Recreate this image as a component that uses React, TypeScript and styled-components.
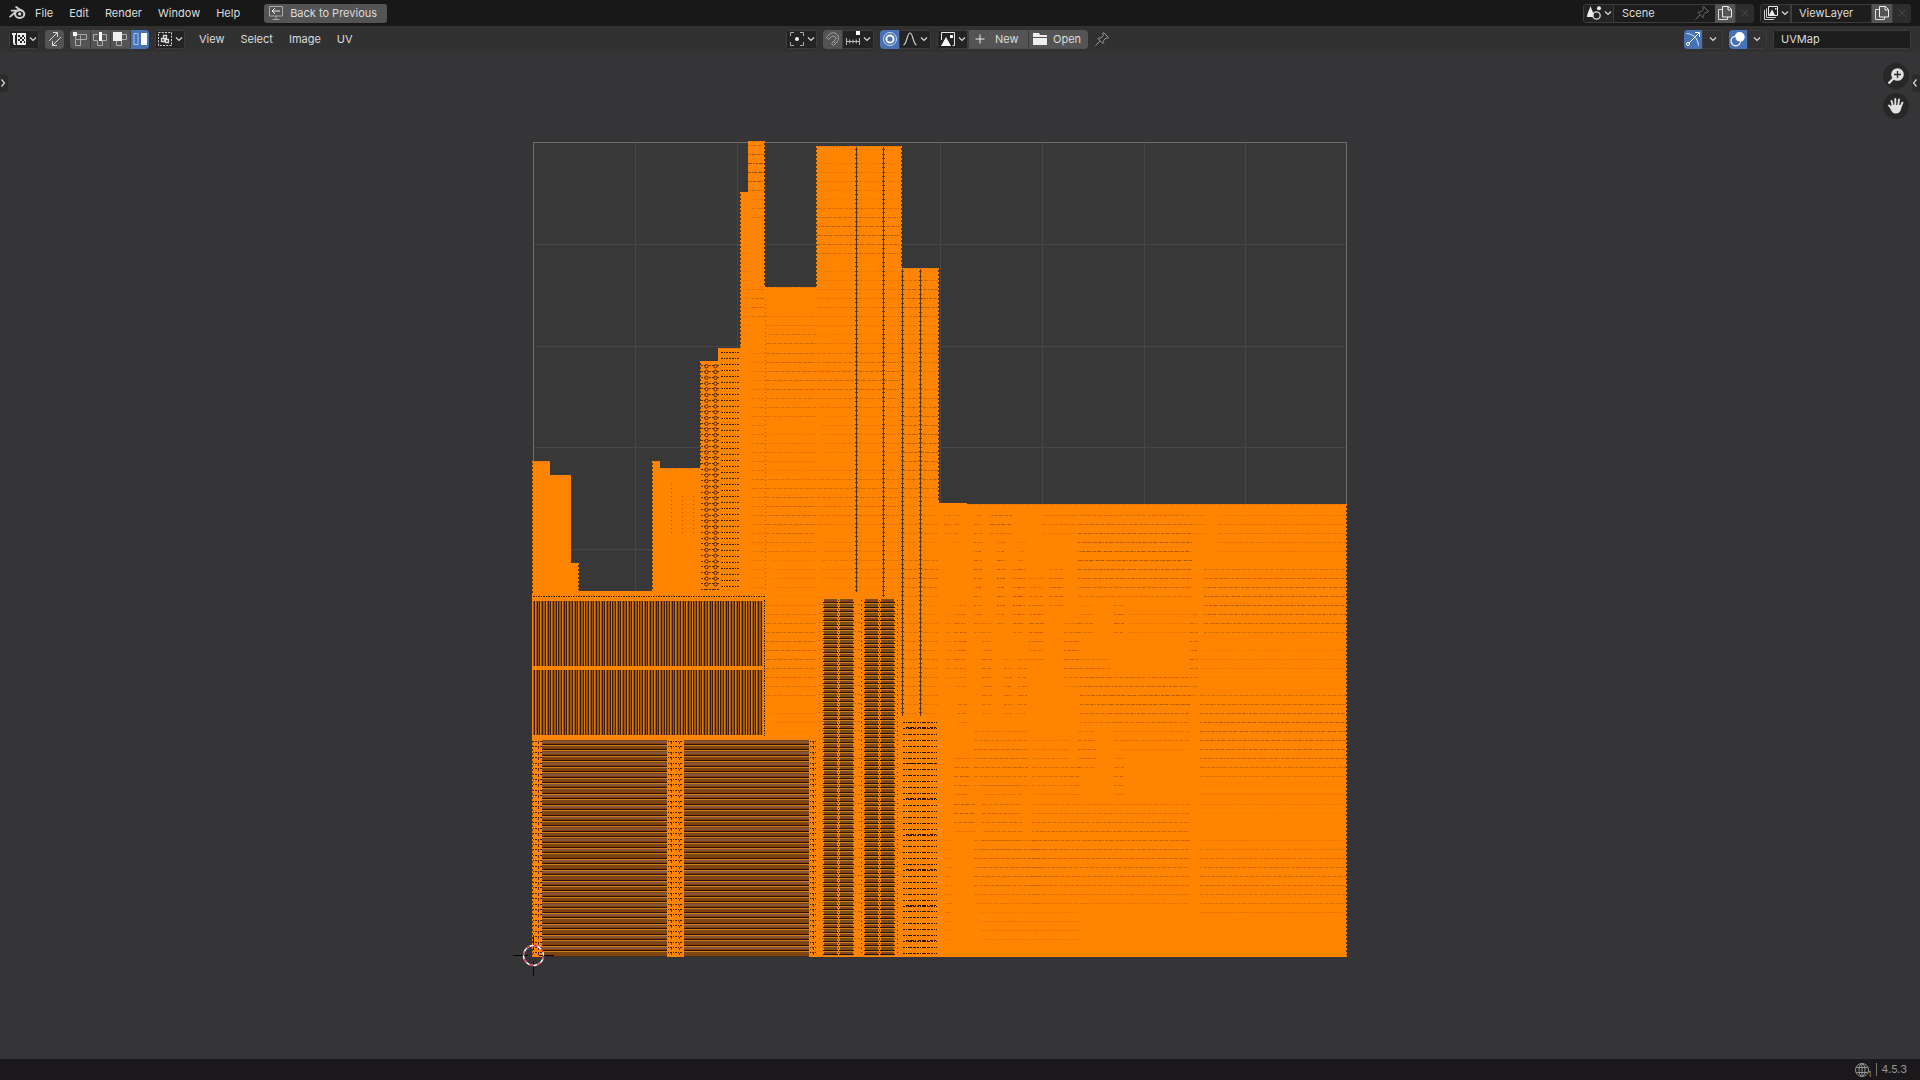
import React from "react";
import styled, { createGlobalStyle } from "styled-components";

const GlobalStyle = createGlobalStyle`
  * { box-sizing: border-box; }
  html, body, #root { height: 100%; }
  body {
    margin: 0;
    background: #353537;
    color: #dcdcdc;
    font: 11px/18px Inter, "Noto Sans", sans-serif;
  }
  button, input { font: inherit; color: inherit; }
`;

/* ---------- layout ---------- */

const Shell = styled.div`
  min-height: 100vh;
  display: flex;
  flex-direction: column;
`;

const TopBar = styled.header`
  height: 26px;
  flex: none;
  display: flex;
  align-items: center;
  justify-content: space-between;
  padding: 0 9px;
  background: #181818;
`;

const EditorHeader = styled.div`
  height: 26px;
  flex: none;
  display: grid;
  grid-template-columns: 1fr auto 1fr;
  align-items: center;
  padding: 0 9px;
  background: #313131;
`;

const Cluster = styled.div<{ $gap?: number; $end?: boolean; $trail?: number }>`
  display: flex;
  align-items: center;
  gap: ${(p) => p.$gap ?? 6}px;
  justify-content: ${(p) => (p.$end ? "flex-end" : "flex-start")};
  margin-right: ${(p) => p.$trail ?? 0}px;
`;

const Canvas = styled.main`
  position: relative;
  flex: 1;
  display: flex;
  justify-content: center;
  align-items: flex-start;
  padding: 68px 40px 0 0;
  overflow: hidden;
`;

const StatusBar = styled.footer`
  height: 21px;
  flex: none;
  display: flex;
  align-items: center;
  justify-content: flex-end;
  gap: 5px;
  padding: 0 13px;
  background: #1a181a;
  color: #969696;
`;

/* ---------- controls ---------- */

const Menus = styled.nav`
  display: flex;
  align-items: center;
  padding-left: 1px;
`;

const MenuItem = styled.button`
  height: 20px;
  padding: 0 8px;
  border: 0;
  background: none;
  white-space: nowrap;
`;

const BackButton = styled.button`
  display: flex;
  align-items: center;
  gap: 6px;
  height: 19px;
  margin-left: 16px;
  padding: 0 10px 0 4px;
  border: 0;
  border-radius: 3px;
  background: #545454;
  white-space: nowrap;
`;

const Group = styled.div`
  display: flex;
  height: 19px;
  flex: none;
  overflow: hidden;
  border-radius: 4px;
  box-shadow: inset 0 0 0 1px #3d3d3d;
`;

const tones = { dark: "#232323", grey: "#545454", blue: "#4772b3", mute: "#2d2d2d", flat: "transparent" };

const Tool = styled.button<{ $w: number; $tone: keyof typeof tones }>`
  width: ${(p) => p.$w}px;
  height: 19px;
  display: flex;
  align-items: center;
  justify-content: center;
  flex: none;
  gap: 2px;
  padding: 0;
  border: 1px solid ${(p) => (p.$tone === "dark" ? "#3d3d3d" : "transparent")};
  border-radius: 0;
  background: ${(p) => tones[p.$tone]};
  background-clip: border-box;
  & + & { border-left-color: #3a3a3a; }
`;

const LabelTool = styled(Tool)`
  justify-content: flex-start;
  gap: 5px;
  padding-left: 3px;
`;

const Label = styled.span<{ $inset?: number }>`
  padding-left: ${(p) => p.$inset ?? 0}px;
`;

const Field = styled.input<{ $w: number }>`
  width: ${(p) => p.$w}px;
  height: 19px;
  padding: 0 7px;
  border: 1px solid #3d3d3d;
  border-radius: 0;
  background: #1d1d1d;
  outline: 0;
`;

const PinnedField = styled.div`
  display: flex;
  align-items: center;
  width: 101px;
  background: #1d1d1d;
  border: 1px solid #3d3d3d;
  border-width: 1px 0;
  input { border: 0; height: 17px; padding-left: 8px; }
`;

const PinButton = styled.button<{ $dim?: boolean }>`
  display: flex;
  padding: 0;
  border: 0;
  background: none;
  color: ${(p) => (p.$dim ? "#6c6c6c" : "#9a9a9a")};
`;

const Version = styled.span`
  padding-left: 4px;
  border-left: 1px solid #777;
  line-height: 13px;
`;

const GlobeRow = styled.span`
  display: flex;
  align-items: flex-end;
`;

const Sub = styled.sub`
  font-size: 8px;
  line-height: 8px;
  margin-left: -2px;
`;

const RegionTab = styled.button<{ $side: "left" | "right" }>`
  position: absolute;
  top: 22px;
  ${(p) => p.$side}: 0;
  width: 8px;
  height: 18px;
  display: flex;
  align-items: center;
  justify-content: flex-start;
  padding: 0;
  border: 0;
  border-radius: ${(p) => (p.$side === "left" ? "0 4px 4px 0" : "4px 0 0 4px")};
  background: #2a2a2a;
`;

const NavGizmos = styled.div`
  position: absolute;
  top: 11px;
  right: 11px;
  display: flex;
  flex-direction: column;
  gap: 4px;
`;

const NavButton = styled.button`
  width: 26px;
  height: 26px;
  display: flex;
  align-items: center;
  justify-content: center;
  padding: 0;
  border: 0;
  border-radius: 50%;
  background: #272728;
`;

const Drawing = styled.svg`
  display: block;
  flex: none;
`;

/* ---------- icons ---------- */

const Svg = ({ children, w = 16, size = 16 }: { children: React.ReactNode; w?: number; size?: number }) => (
  <svg width={w} height={size} viewBox={`0 0 ${w} ${size}`} fill="none" stroke="currentColor" strokeWidth="1" aria-hidden="true">
    {children}
  </svg>
);

const Chevron = () => (
  <Svg w={8} size={8}><path d="M1 2.500 4 5.500 7 2.500" strokeWidth="1.200" /></Svg>
);

const BlenderLogo = () => (
  <svg width="17" height="16" viewBox="0 0 17 16" fill="none" stroke="#d0d0d0" aria-hidden="true">
    <ellipse cx="10.700" cy="9" rx="4.600" ry="4" strokeWidth="2" />
    <circle cx="10.700" cy="8.900" r="1.700" fill="#d0d0d0" stroke="none" />
    <path d="M7.200 2 13.500 6.200M2.600 5.600H10M1.200 11.600 7.200 6.400" strokeWidth="1.900" strokeLinecap="round" />
  </svg>
);

const BackIcon = () => (
  <Svg><path d="M1.500 1.500h13v9.500h-13zM8 11v3M4.500 14.500h7" stroke="#aaa" /><path d="M12 6H4M7 3.200 4 6l3 2.800" stroke="#eee" /></Svg>
);

const UvEditorIcon = () => (
  <Svg>
    <path d="M1 2h4v2l-1 0v8l1 2H3L2 12V4H1zM6 2h9v12H6z" fill="#eee" stroke="none" />
    <path d="M7 4h2v2H7zM11 4h2v2h-2zM9 6h2v2H9zM13 6h1v2h-1zM7 8h2v2H7zM11 8h2v2h-2zM9 10h2v2H9zM13 10h1v2h-1z" fill="#222" stroke="none" />
  </Svg>
);

const SyncIcon = () => (
  <Svg><path d="M2 10 10.500 1.500M6 1.500h4.500V6M14 6l-8.500 8.500M10 14.500H5.500V10" stroke="#d8d8d8" /></Svg>
);

const VertexIcon = () => (
  <Svg><path d="M5 3.500h9.500v5H3.500V5M3.500 8.500v6h5v-10" stroke="#aaa" /><path d="M1 1h4v4H1z" fill="#fff" stroke="none" /></Svg>
);
const EdgeIcon = () => (
  <Svg><path d="M6 3.500H1.500v6h4v5h5v-5M10 3.500h4.500v6H10" stroke="#aaa" /><path d="M7 1h3v9H7z" fill="#fff" stroke="none" /></Svg>
);
const FaceIcon = () => (
  <Svg><path d="M10 3.500h4.500v5H10M4.500 10v4.500h5V10" stroke="#aaa" /><path d="M1 1h9v9H1z" fill="#eee" stroke="none" /></Svg>
);
const IslandIcon = () => (
  <Svg><path d="M2 2.500h4v11H2z" stroke="#a9c3ef" /><path d="M9 2h6v12H9z" fill="#fff" stroke="none" /></Svg>
);
const StickyIcon = () => (
  <Svg><path d="M1.500 1.500h13v13h-13z" strokeDasharray="2 1.250" /><path d="M6.500 4.500h3v3h-3zM4.500 7.500h3v3h-3zM8.500 8.500h3v3h-3z" strokeWidth="1.300" /></Svg>
);
const PivotIcon = () => (
  <Svg><path d="M1.500 5V1.500H5M11 1.500h3.500V5M14.500 11v3.500H11M5 14.500H1.500V11" stroke="#aaa" /><circle cx="8" cy="8" r="2" fill="#eee" stroke="none" /></Svg>
);
const MagnetIcon = () => (
  <Svg><path d="M1.500 6.500 4 3.500a5.300 5.300 0 0 1 8 7.500l-3.500 3.500-2-2L10 9a2.400 2.400 0 0 0-3.500-3.300L3.500 8.500zM10.500 12.500l-2-2" stroke="#a5a5a5" /></Svg>
);
const SnapIcon = () => (
  <Svg><path d="M1.500 7v7M14.500 7v7M1.500 10.500h13M4.700 8.500v4M8 8.500v4M11.300 8.500v4" stroke="#bbb" /><path d="M11 0h4v4h-4z" fill="#fff" stroke="none" /></Svg>
);
const ProportionalIcon = () => (
  <Svg><circle cx="8" cy="8" r="6.500" stroke="#c4d8f8" /><circle cx="8" cy="8" r="3.600" stroke="#fff" strokeWidth="2" /></Svg>
);
const FalloffIcon = () => (
  <Svg><path d="M1.500 14C5 13 5 2 8 2s3 11 6.500 12" stroke="#ccc" strokeWidth="1.200" /></Svg>
);
const ImageIcon = () => (
  <Svg><path d="M1.500 9V1.500h13v13h-2" stroke="#e5e5e5" /><path d="M1 15 6 6l5 9z" fill="#fff" stroke="none" /><path d="M10 4h3v3h-3z" fill="#fff" stroke="none" /></Svg>
);
const PlusIcon = () => (<Svg><path d="M8 3.500v9M3.500 8h9" stroke="#eee" /></Svg>);
const FolderIcon = () => (
  <Svg><path d="M1 2h6l1 2h7v2H1zM1 7h14v7H1z" fill="#eee" stroke="none" /></Svg>
);
const PinIcon = () => (
  <Svg><path d="M9.500 1.500 14.500 6.500 13 7.500 12 7 9.500 9.500c.5 1.500 0 2.500-.5 3L4 7.500c1-.7 2-.8 3-.5L9.500 4.500 8.700 3zM6 10l-4.500 4.500" /></Svg>
);
const SceneIcon = () => (
  <Svg><path d="M4.500 1C5.500 5 8 7.500 7.500 12H1C1 8 3.500 5 4.500 1z" fill="#eee" stroke="none" /><circle cx="10.500" cy="10.500" r="3.700" stroke="#ddd" strokeWidth="1.300" /><circle cx="13" cy="3.300" r="2" fill="#eee" stroke="none" /></Svg>
);
const LayersIcon = () => (
  <Svg><path d="M1.500 5v9.500H11M3.500 3.500v9H13" stroke="#ccc" /><path d="M5.500 1.500h9v9h-9z" stroke="#eee" /><path d="m6 10 3-5.500 3 5.500zM12 3h1.500v1.500H12z" fill="#eee" stroke="none" /></Svg>
);
const CopyIcon = () => (
  <Svg><path d="M5 4.500H1.500v10h9V12" stroke="#ddd" /><path d="M5.500 1.500h6l3 3v7.500h-9zM11 1.500V5h3.500" stroke="#eee" /></Svg>
);
const CloseIcon = () => (<Svg><path d="m4.500 4.500 7 7M11.500 4.500l-7 7" stroke="#484848" /></Svg>);
const GizmoIcon = () => (
  <Svg><path d="M1.500 2.500c6 0 11.500 5 12 12" stroke="#dce8fb" /><path d="M4 12 14 2M10 1.500h4.500V6" stroke="#fff" /><circle cx="3" cy="13" r="1.500" stroke="#fff" /></Svg>
);
const OverlayIcon = () => (
  <Svg><circle cx="9.700" cy="6" r="5" fill="#fff" stroke="none" /><circle cx="5.800" cy="10" r="4.800" stroke="#fff" strokeWidth="1.200" /><path d="M5.500 6.500a4 4 0 0 0 4.500 4.500" stroke="#4772b3" /></Svg>
);
const ZoomIcon = () => (
  <Svg w={18} size={18}><circle cx="10.500" cy="7.500" r="6.300" fill="#e0e0e0" stroke="none" /><path d="m6.500 11.500-5 5" stroke="#e0e0e0" strokeWidth="2.400" /><path d="M10.500 4v7M7 7.500h7" stroke="#272728" strokeWidth="1.300" /></Svg>
);
const HandIcon = () => (
  <Svg w={18} size={18}>
    <path d="M6 9 4.500 4M8.300 8V2M11.300 8 12 2.500M13.500 10 15.500 5.500M5 11.500 2 8.500" stroke="#e0e0e0" strokeWidth="1.900" strokeLinecap="round" />
    <path d="M5 8h9.500c0 5-1.500 8.500-5.500 8.500S4.500 14 2.500 10z" fill="#e0e0e0" stroke="none" />
  </Svg>
);
const GlobeIcon = () => (
  <Svg><circle cx="8" cy="8" r="6.500" /><ellipse cx="8" cy="8" rx="3" ry="6.500" /><path d="M2.500 5.500h11M2.500 10.500h11M8 1.500v13" /></Svg>
);
const ArrowIcon = ({ left }: { left?: boolean }) => (
  <Svg w={6} size={10}><path d={left ? "M4.500 1.500 1.500 5l3 3.500" : "M1.500 1.500 4.500 5l-3 3.500"} strokeWidth="1.200" /></Svg>
);

/* ---------- UV layout ---------- */

const ORANGE = "#ff8500";
const SEAM_STEP = 9.02;

const rows = (x0: number, x1: number, y0: number, y1: number, step: number) => {
  let d = "";
  for (let y = y0; y <= y1; y += step) d += `M${x0} ${y.toFixed(1)}H${x1}`;
  return d;
};
const cols = (x0: number, x1: number, y0: number, y1: number, step: number) => {
  let d = "";
  for (let x = x0; x <= x1; x += step) d += `M${x.toFixed(1)} ${y0}V${y1}`;
  return d;
};

const SILHOUETTE =
  "M532 957V461H550V475H571V563H579V591H652V461H660V468H700V361H718V348H740V192H748V141H765V287H816V146H902V268H939V503H967V504H1347V957H816V957Z";

// x from, x to, first row, last row, strength
const SEAMS: [number, number, number, number, number][] = [
  [748, 765, 145, 194, 0.9], [752, 764, 199, 226, 0.35], [742, 750, 250, 340, 0.25], [752, 764, 286, 322, 0.5],
  [752, 764, 350, 590, 0.35], [766, 816, 314, 422, 0.5], [766, 816, 430, 475, 0.25], [766, 816, 475, 556, 0.5],
  [772, 816, 556, 600, 0.2], [766, 816, 601, 700, 0.5], [772, 816, 705, 732, 0.2],
  [817, 900, 155, 200, 0.2], [817, 900, 204, 262, 0.6], [817, 900, 268, 340, 0.25], [817, 900, 343, 410, 0.5],
  [822, 900, 415, 460, 0.25], [817, 900, 465, 530, 0.4], [822, 900, 535, 590, 0.25],
  [903, 938, 276, 320, 0.6], [903, 938, 322, 380, 0.3], [903, 938, 388, 500, 0.6], [903, 938, 505, 545, 0.3],
  [903, 938, 554, 600, 0.5], [903, 938, 605, 716, 0.35],
  [944, 952, 507, 536, 0.4], [954, 960, 512, 545, 0.4], [974, 982, 508, 640, 0.6], [990, 1012, 508, 535, 0.7],
  [997, 1005, 535, 630, 0.7], [1018, 1026, 535, 630, 0.4], [954, 966, 597, 690, 0.55], [958, 967, 696, 730, 0.55],
  [946, 952, 608, 690, 0.3], [1013, 1022, 566, 640, 0.6], [1029, 1044, 575, 665, 0.55], [1049, 1064, 566, 612, 0.6],
  [1064, 1080, 620, 690, 0.55], [982, 992, 620, 720, 0.5], [1004, 1012, 656, 720, 0.5], [1018, 1027, 656, 720, 0.55],
  [1042, 1076, 508, 535, 0.35], [1078, 1192, 508, 600, 0.7], [1192, 1206, 508, 535, 0.3], [1078, 1094, 605, 640, 0.4],
  [1114, 1124, 598, 640, 0.6], [1128, 1190, 606, 640, 0.2], [1204, 1346, 562, 640, 0.65], [1218, 1346, 513, 555, 0.3],
  [1190, 1198, 606, 700, 0.6], [1080, 1110, 657, 730, 0.6], [1110, 1190, 670, 730, 0.65], [1200, 1346, 645, 680, 0.18],
  [1200, 1346, 688, 778, 0.65], [974, 1028, 729, 790, 0.5], [954, 970, 750, 806, 0.55], [1032, 1070, 740, 800, 0.35],
  [1070, 1080, 760, 800, 0.5], [1078, 1096, 729, 776, 0.5], [1114, 1190, 729, 750, 0.35], [1114, 1124, 756, 800, 0.5],
  [982, 1022, 785, 850, 0.45], [1032, 1190, 795, 905, 0.5], [1200, 1346, 785, 815, 0.2], [954, 975, 795, 832, 0.6],
  [974, 1040, 832, 905, 0.5], [1200, 1346, 840, 915, 0.45], [945, 952, 834, 945, 0.35], [980, 1080, 910, 945, 0.25],
];

// strength rises and falls across a band, strongest in its middle rows
const seamRows = ([x0, x1, y0, y1, strength]: (typeof SEAMS)[number]) => {
  const out: { d: string; o: number; shift: number }[] = [];
  const first = 145.5 + Math.ceil((y0 - 145.5) / SEAM_STEP) * SEAM_STEP;
  for (let y = first; y <= y1; y += SEAM_STEP) {
    const t = (y - y0) / Math.max(1, y1 - y0);
    out.push({
      d: `M${x0} ${y.toFixed(1)}H${x1}`,
      o: +(strength * (0.35 + 0.45 * Math.sin(Math.PI * t))).toFixed(2),
      shift: Math.round(y) % 4,
    });
  }
  return out;
};

const UvLayout = () => (
  <Drawing width="900" height="880" viewBox="490 120 900 880" role="img" aria-label="UV layout">
    <path d="M533 142H1346V956H533Z" fill="#383839" />
    <path d={cols(635.5, 1300, 143, 956, 101.7) + rows(534, 1346, 244.5, 900, 101.7)} stroke="#464648" shapeRendering="crispEdges" />
    <path d="M533.500 142.500H1346.500V956.500H533.500Z" fill="none" stroke="#6e6e6e" />

    <g shapeRendering="crispEdges" fill="none">
      <path d={SILHOUETTE} fill={ORANGE} />

      {/* outline vertices */}
      <path d="M532.500 463V594M532.500 741V955M652.500 463V590M578.500 565V590M700.500 363V466M740.500 194V347M764.500 143V286M816.500 148V286M938.500 270V502M1346.500 506V955M901.500 148V266" stroke="#4b3a27" strokeDasharray="2 2" />
      <path d="M534 461.500H550M654 461.500H660M662 468.500H700M720 348.500H740M750 141.500H765M767 287.500H816M818 146.500H902M904 268.500H939M969 504.500H1346" stroke="#c96c08" strokeDasharray="1 2" />

      {/* seam rows */}
      {SEAMS.flatMap(seamRows).map((s, i) => (
        <path key={i} d={s.d} stroke="#733500" strokeOpacity={s.o} strokeDasharray="4 1 1 1 3 1" strokeDashoffset={s.shift} />
      ))}

      {/* beaded columns */}
      <path d="M856.500 147V592M883.500 147V597M902.500 269V716M920.500 269V716" stroke="#423a33" />
      <path d="M856.500 149V592M883.500 149V597M902.500 271V716M920.500 271V716" stroke="#5a3d20" strokeWidth="3" strokeDasharray="1 3.500" />

      {/* faint dotted columns */}
      <path d="M671.500 484V536M682.500 496V536M693.500 496V536M765.500 300V590" stroke="#b35d05" strokeDasharray="1 3" />

      {/* ringed vertices */}
      <path d={rows(701, 719, 365.8, 590, 5.74)} stroke="#5a2c00" strokeDasharray="2 1 4 1" />
      <path d={rows(721, 740, 352.8, 590, 6)} stroke="#3a1a00" strokeDasharray="2 1 1 1 2 1 2 1" />

      {/* vertical strips */}
      <path d="M533 601H763V666H533ZM533 670H763V735H533Z" fill="#a2560b" />
      <path d={cols(535.5, 763, 601, 666, 5.4) + cols(535.5, 763, 670, 735, 5.4)} stroke="#cf7d14" />
      <path d={cols(534.5, 763, 601, 666, 2.7) + cols(534.5, 763, 670, 735, 2.7)} stroke="#3c1c08" />
      <path d="M533 596.500H765M764.500 600V736" stroke="#3a1c02" strokeDasharray="2 1 1 1" />

      {/* horizontal strips */}
      <path d="M542 740H667V956H542ZM684 740H809V956H684Z" fill="#7d4616" />
      <path d={rows(542, 667, 742, 955, 10.84) + rows(684, 809, 742, 955, 10.84)} stroke="#85543a" strokeWidth="2" />
      <path d={rows(542, 667, 743.5, 955, 5.42) + rows(684, 809, 743.5, 955, 5.42)} stroke="#854000" />
      <path d={rows(542, 667, 744.5, 955, 5.42) + rows(684, 809, 744.5, 955, 5.42)} stroke="#2f0e08" />
      <path d={rows(542, 667, 745.5, 955, 5.42) + rows(684, 809, 745.5, 955, 5.42)} stroke="#cc7e1b" />
      <path d={rows(533, 542, 741.5, 955, 5.42) + rows(668, 683, 741.5, 955, 5.42) + rows(810, 816, 741.5, 955, 5.42)} stroke="#432000" strokeDasharray="1 1 2 1" />
      <path d="M538.500 742V955M671.500 742V955M679.500 742V955M813.500 742V955" stroke="#5c2b00" strokeDasharray="2 3.420" />
      <path d="M542 956.500H667M684 956.500H809" stroke="#3b2c20" />

      {/* narrow ladders */}
      {[824, 840, 865, 881].map((x) => (
        <g key={x}>
          <path d={`M${x} 599H${x + 13}V956H${x}Z`} fill="#7a5018" />
          <path d={rows(x, x + 13, 601, 955, 9.03)} stroke="#85441c" strokeWidth="2" />
          <path d={rows(x - 1, x + 14, 602.5, 956, 4.515)} stroke="#2c1004" />
          <path d={rows(x, x + 13, 603.5, 956, 4.515)} stroke="#d0801a" />
        </g>
      ))}
      <path d={rows(819, 900, 604.5, 955, 9.03)} stroke="#6e3300" strokeDasharray="1 2 2 1" strokeOpacity="0.5" />
      <path d="M861.500 600V955M897.500 600V955M838.500 600V955M879.500 600V955" stroke="#5c2b00" strokeDasharray="1 3.515" />

      {/* dashed rows */}
      <path d={rows(903, 937, 722.5, 954, 5.92)} stroke="#2c1200" strokeDasharray="2 1 1 1 4 1 3 1" />
      <path d={rows(906, 936, 727.5, 954, 35.5)} stroke="#2c1200" strokeDasharray="3 1 4 1 1 2" />
    </g>

    <g fill={ORANGE} stroke="#4a2600" strokeWidth="1">
      {Array.from({ length: 39 }, (_, i) => (
        <React.Fragment key={i}>
          <circle cx="706.500" cy={366.3 + i * 5.74} r="1.700" />
          <circle cx="715.500" cy={366.3 + i * 5.74} r="1.700" />
        </React.Fragment>
      ))}
    </g>

    {/* 2D cursor */}
    <g fill="none">
      <path d="M513.500 955.500H528M539 955.500H554M533.500 935.500V950M533.500 961V975.500" stroke="#050505" />
      <circle cx="533.500" cy="955.500" r="10" stroke="#fff" strokeWidth="1.300" />
      <circle cx="533.500" cy="955.500" r="10" stroke="#d8203c" strokeWidth="1.300" strokeDasharray="3.927" />
    </g>
  </Drawing>
);

/* ---------- app ---------- */

const Drop = ({ label, w = 31, icon }: { label: string; w?: number; icon: React.ReactNode }) => (
  <Tool $w={w} $tone="dark" aria-label={label}>{icon}<Chevron /></Tool>
);

export default function App() {
  return (
    <Shell>
      <GlobalStyle />
      <TopBar>
        <Cluster $gap={0}>
          <BlenderLogo />
          <Menus aria-label="Application">
            {["File", "Edit", "Render", "Window", "Help"].map((m) => (
              <MenuItem key={m}>{m}</MenuItem>
            ))}
          </Menus>
          <BackButton><BackIcon />Back to Previous</BackButton>
        </Cluster>
        <Cluster>
          <Group>
            <Drop label="Browse scene" icon={<SceneIcon />} />
            <PinnedField>
              <Field $w={80} aria-label="Scene name" defaultValue="Scene" />
              <PinButton $dim aria-label="Pin scene"><PinIcon /></PinButton>
            </PinnedField>
            <Tool $w={20} $tone="grey" aria-label="New scene"><CopyIcon /></Tool>
            <Tool $w={19} $tone="mute" aria-label="Delete scene"><CloseIcon /></Tool>
          </Group>
          <Group>
            <Drop label="Browse view layer" icon={<LayersIcon />} />
            <Field $w={81} aria-label="View layer name" defaultValue="ViewLayer" />
            <Tool $w={20} $tone="grey" aria-label="Add view layer"><CopyIcon /></Tool>
            <Tool $w={19} $tone="mute" aria-label="Remove view layer"><CloseIcon /></Tool>
          </Group>
        </Cluster>
      </TopBar>

      <EditorHeader>
        <Cluster>
          <Group><Drop w={30} label="Editor type" icon={<UvEditorIcon />} /></Group>
          <Group><Tool $w={19} $tone="grey" aria-label="Sync selection"><SyncIcon /></Tool></Group>
          <Group>
            <Tool $w={20} $tone="grey" aria-label="Vertex"><VertexIcon /></Tool>
            <Tool $w={20} $tone="grey" aria-label="Edge"><EdgeIcon /></Tool>
            <Tool $w={20} $tone="grey" aria-label="Face"><FaceIcon /></Tool>
            <Tool $w={19} $tone="blue" aria-label="Island"><IslandIcon /></Tool>
          </Group>
          <Group><Drop w={30} label="Sticky selection mode" icon={<StickyIcon />} /></Group>
          <Cluster as="nav" $gap={0} aria-label="Editor">
            {["View", "Select", "Image", "UV"].map((m) => (
              <MenuItem key={m}>{m}</MenuItem>
            ))}
          </Cluster>
        </Cluster>

        <Cluster $trail={24}>
          <Group><Drop label="Pivot point" icon={<PivotIcon />} /></Group>
          <Group>
            <Tool $w={19} $tone="grey" aria-label="Snap"><MagnetIcon /></Tool>
            <Drop w={32} label="Snapping" icon={<SnapIcon />} />
          </Group>
          <Group>
            <Tool $w={19} $tone="blue" aria-label="Proportional editing"><ProportionalIcon /></Tool>
            <Drop w={32} label="Falloff" icon={<FalloffIcon />} />
          </Group>
          <Group>
            <Drop label="Browse image" icon={<ImageIcon />} />
            <LabelTool $w={60} $tone="grey"><PlusIcon /><Label $inset={2}>New</Label></LabelTool>
            <LabelTool $w={60} $tone="grey"><FolderIcon /><Label>Open</Label></LabelTool>
          </Group>
          <PinButton aria-label="Pin image"><PinIcon /></PinButton>
        </Cluster>

        <Cluster $end>
          <Group>
            <Tool $w={18} $tone="blue" aria-label="Show gizmos"><GizmoIcon /></Tool>
            <Tool $w={21} $tone="flat" aria-label="Gizmo options"><Chevron /></Tool>
          </Group>
          <Group>
            <Tool $w={18} $tone="blue" aria-label="Show overlays"><OverlayIcon /></Tool>
            <Tool $w={20} $tone="flat" aria-label="Overlay options"><Chevron /></Tool>
          </Group>
          <Group><Field $w={138} aria-label="Active UV map" defaultValue="UVMap" /></Group>
        </Cluster>
      </EditorHeader>

      <Canvas>
        <UvLayout />
        <RegionTab $side="left" aria-label="Show toolbar"><ArrowIcon /></RegionTab>
        <RegionTab $side="right" aria-label="Show sidebar"><ArrowIcon left /></RegionTab>
        <NavGizmos>
          <NavButton aria-label="Zoom view"><ZoomIcon /></NavButton>
          <NavButton aria-label="Move view"><HandIcon /></NavButton>
        </NavGizmos>
      </Canvas>

      <StatusBar>
        <GlobeRow>
          <GlobeIcon />
          <Sub>1</Sub>
        </GlobeRow>
        <Version>4.5.3</Version>
      </StatusBar>
    </Shell>
  );
}
